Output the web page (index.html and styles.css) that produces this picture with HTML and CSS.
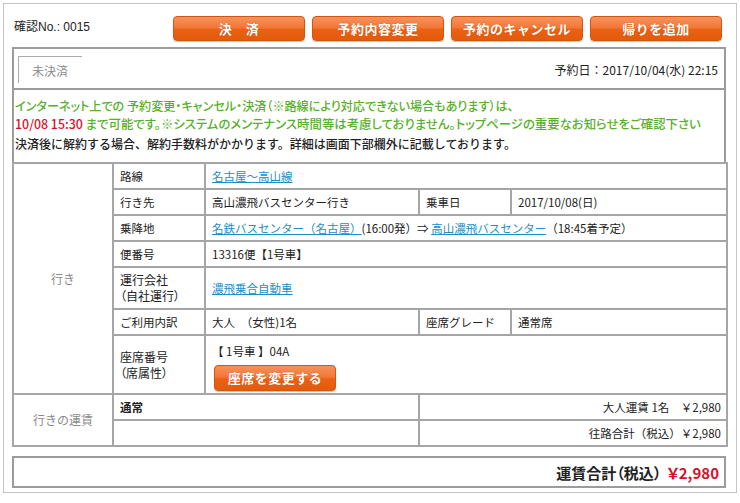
FILE: index.html
```html
<!DOCTYPE html>
<html lang="ja">
<head>
<meta charset="utf-8">
<link rel="stylesheet" href="styles.css">
</head>
<body>
<div class="page">
  <div class="header">
    <div class="conf">確認No.: 0015</div>
    <div class="btns">
      <a class="btn">決　済</a>
      <a class="btn">予約内容変更</a>
      <a class="btn">予約のキャンセル</a>
      <a class="btn">帰りを追加</a>
    </div>
  </div>

  <div class="status">
    <div class="tab">未決済</div>
    <div class="resdate">予約日：2017/10/04(水) 22:15</div>
  </div>

  <div class="notice">
    <p class="green l1">インターネット上での 予約変更・キャンセル・決済（※路線により対応できない場合もあります）は、</p>
    <p class="green l2"><span class="red">10/08 15:30</span> まで可能です。※システムのメンテナンス時間等は考慮しておりません。トップページの重要なお知らせをご確認下さい</p>
    <p class="l3">決済後に解約する場合、解約手数料がかかります。詳細は画面下部欄外に記載しております。</p>
  </div>

  <table class="detail">
    <colgroup>
      <col class="c1"><col class="c2"><col class="c3"><col class="c4"><col class="c5">
    </colgroup>
    <tr class="r26">
      <td class="sec" rowspan="7">行き</td>
      <th>路線</th>
      <td colspan="3"><a class="lnk">名古屋～高山線</a></td>
    </tr>
    <tr class="r26">
      <th>行き先</th>
      <td>高山濃飛バスセンター行き</td>
      <th>乗車日</th>
      <td>2017/10/08(日)</td>
    </tr>
    <tr class="r26">
      <th>乗降地</th>
      <td colspan="3"><a class="lnk">名鉄バスセンター（名古屋）</a>(16:00発）⇒ <a class="lnk">高山濃飛バスセンター</a>（18:45着予定）</td>
    </tr>
    <tr class="r26">
      <th>便番号</th>
      <td colspan="3">13316便【1号車】</td>
    </tr>
    <tr class="r42">
      <th class="palt">運行会社<br>（自社運行）</th>
      <td colspan="3"><a class="lnk">濃飛乗合自動車</a></td>
    </tr>
    <tr class="r26">
      <th>ご利用内訳</th>
      <td>大人　（女性)1名</td>
      <th>座席グレード</th>
      <td>通常席</td>
    </tr>
    <tr class="r59">
      <th class="palt">座席番号<br>（席属性）</th>
      <td colspan="3" class="seat">
        <div>【 1号車 】04A</div>
        <a class="btn seatbtn">座席を変更する</a>
      </td>
    </tr>
    <tr class="r26">
      <td class="sec" rowspan="2">行きの運賃</td>
      <td colspan="2" class="bold">通常</td>
      <td colspan="2" class="right">大人運賃 1名　￥2,980</td>
    </tr>
    <tr class="r26">
      <td colspan="2"></td>
      <td colspan="2" class="right">往路合計（税込）￥2,980</td>
    </tr>
  </table>

  <div class="total">運賃合計（税込）<span class="red">￥2,980</span></div>
</div>
</body>
</html>
```

FILE: styles.css
```css
html, body {
  margin: 0;
  padding: 0;
  background: #fff;
}
body {
  font-family: "Noto Sans CJK JP", "Noto Sans", sans-serif;
  font-size: 12px;
  color: #222;
}
.page {
  margin: 3px;
  height: 488px;
  border: 1px solid #c4c4c4;
  padding: 0 10px 0 8px;
}
.header {
  display: flex;
  align-items: center;
  height: 43px;
}
.conf {
  padding-left: 2px;
  font-size: 12px;
  color: #222;
  font-family: "Liberation Sans", "Noto Sans CJK JP", sans-serif;
}
.btns {
  margin-left: auto;
  margin-right: 4px;
  display: flex;
  gap: 7px;
  padding-top: 6px;
}
.btn {
  display: flex;
  align-items: center;
  justify-content: center;
  width: 132px;
  height: 25px;
  box-sizing: border-box;
  border-radius: 4px;
  border: 1px solid #d2560f;
  background: linear-gradient(#f7925a 0%, #f2783a 45%, #ea6112 55%, #e55a0c 100%);
  color: #fff;
  font-weight: bold;
  font-size: 13px;
  letter-spacing: 0.5px;
  text-shadow: 0 0 1px #c04a08;
  box-shadow: 0 1px 1px rgba(0,0,0,0.25);
}
.status {
  display: flex;
  justify-content: space-between;
  align-items: center;
  border: 2px solid #9c9c9c;
  height: 43px;
  box-sizing: border-box;
  padding: 7px 6px 5px 4px;
}
.tab {
  align-self: stretch;
  width: 64px;
  box-sizing: border-box;
  border-left: 1px solid #aaa;
  border-top: 1px solid #aaa;
  padding-left: 13px;
  display: flex;
  align-items: center;
  color: #8a8a8a;
  font-size: 12px;
}
.resdate {
  font-size: 12px;
  color: #222;
}
.notice {
  border: 2px solid #9c9c9c;
  border-top: none;
  border-bottom: none;
  height: 72px;
  box-sizing: border-box;
  padding: 6px 0 0 1px;
}
.notice p {
  margin: 0;
  line-height: 19px;
  white-space: nowrap;
  font-weight: 500;
}
.green {
  color: #57b02a;
}
.red {
  color: #d8102a;
}
.l1 {
  font-size: 12.1px;
  font-feature-settings: "palt";
}
.l2 {
  font-size: 12.4px;
  font-feature-settings: "palt";
}
.l3 {
  font-size: 12px;
  color: #222;
}
.detail {
  width: 714px;
  border-collapse: collapse;
  table-layout: fixed;
  font-size: 11.5px;
}
.c1 { width: 100px; }
.c2 { width: 92px; }
.c3 { width: 214px; }
.c4 { width: 92px; }
.c5 { width: 216px; }
.detail td, .detail th {
  border: 2px solid #a6a6a6;
  padding: 0 6px;
  text-align: left;
  font-weight: normal;
  vertical-align: middle;
  line-height: 16px;
  color: #222;
}
.detail th.palt {
  font-feature-settings: "palt";
  font-size: 12px;
}
.r26 { height: 26px; }
.r42 { height: 42px; }
.r59 { height: 59px; }
.detail td.sec {
  text-align: center;
  color: #8a8a8a;
  font-size: 12px;
}
.lnk {
  color: #1d8ec8;
  text-decoration: underline;
}
.seat {
  vertical-align: top;
  padding-top: 5px;
}
.seat div {
  line-height: 16px;
  padding-top: 4px;
}
.seatbtn {
  width: 122px;
  height: 26px;
  margin-top: 6px;
  margin-left: 2px;
  font-size: 13px;
}
.detail td.bold {
  font-weight: bold;
  vertical-align: top;
  padding-top: 4px;
}
.detail td.right {
  text-align: right;
  padding-right: 5px;
}
.total {
  margin-top: 9px;
  width: 714px;
  box-sizing: border-box;
  height: 32px;
  border: 2px solid #9c9c9c;
  display: flex;
  align-items: center;
  justify-content: flex-end;
  padding-right: 5px;
  font-size: 15px;
  font-weight: bold;
  color: #222;
  font-feature-settings: "palt";
}
.total .red {
  margin-left: 6px;
}
```
